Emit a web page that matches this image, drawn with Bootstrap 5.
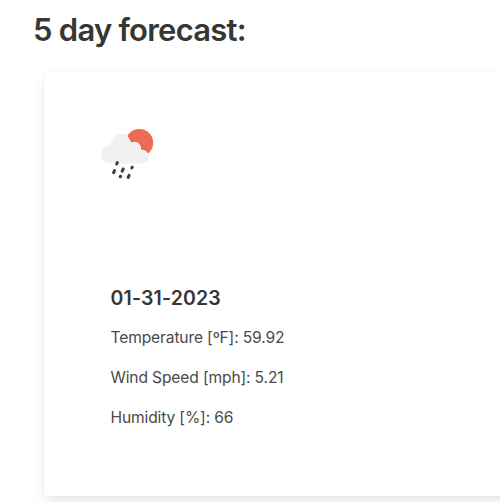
<!DOCTYPE html>
<html lang="en">
<head>
<meta charset="utf-8">
<meta name="viewport" content="width=device-width, initial-scale=1">
<title>5 day forecast</title>
<link href="https://cdn.jsdelivr.net/npm/bootstrap@5.3.0/dist/css/bootstrap.min.css" rel="stylesheet">
<style>
body { font-family: Inter, "Liberation Sans", sans-serif; color: #4a4a4a; background: #fff; }
.forecast { height: 502px; padding: 12px 0 0 33px; }
.forecast-title { font-size: 31px; font-weight: 600; line-height: 36px; color: #363636; letter-spacing: -.75px; }
.forecast-card { width: 520px; height: 425px; margin: 23px 0 0 11px; border-radius: 4px; box-shadow: 0 8px 16px -2px rgba(10,10,10,.1), 0 0 0 1px rgba(10,10,10,.02); padding: 49px 0 0 51px; }
.weather-icon { width: 64px; height: 64px; }
.details { margin: 103px 0 0 15.5px; }
.date { font-size: 19.5px; font-weight: 600; line-height: 22px; padding-bottom: 1px; color: #363636; letter-spacing: .16px; }
.details p { font-size: 15.6px; line-height: 24px; white-space: nowrap; letter-spacing: -.14px; }
</style>
</head>
<body>
<main class="forecast overflow-hidden">
  <h2 class="forecast-title mb-0">5 day forecast:</h2>
  <section class="forecast-card card border-0 bg-white">
    <svg class="weather-icon d-block" viewBox="0 0 64 64" aria-hidden="true">
      <clipPath id="sun"><circle cx="44.4" cy="22.8" r="13.8"/></clipPath>
      <circle cx="44.4" cy="22.8" r="13.8" fill="#ef6a52"/>
      <g clip-path="url(#sun)" fill="#ee4b3b">
        <circle cx="26" cy="24" r="11.2"/><circle cx="39.5" cy="28.3" r="7.6"/><circle cx="47" cy="36.4" r="7.9"/>
      </g>
      <g fill="#f1f1f1">
        <circle cx="15.3" cy="34.2" r="9.2"/><circle cx="26" cy="24" r="10.3"/>
        <circle cx="39.5" cy="28.3" r="6.7"/><circle cx="47" cy="36.4" r="7"/>
        <path d="M15.3 27H40L47 34V43.4H15.3Z"/>
      </g>
      <g stroke="#404040" stroke-width="3.1" stroke-linecap="round">
        <path d="M22.3 42.6l-.6 1.4M19.5 50.6l-.9 2M28.2 49l-1 2.2M37.3 47.2l-.5.7M25.6 56.3l-.4.5M34.1 55.4l-.9 2"/>
      </g>
    </svg>
    <div class="details">
      <h3 class="date mb-3">01-31-2023</h3>
      <p class="mb-3">Temperature [ºF]: 59.92</p>
      <p class="mb-3">Wind Speed [mph]: 5.21</p>
      <p class="mb-0">Humidity [%]: 66</p>
    </div>
  </section>
</main>
<script src="https://cdn.jsdelivr.net/npm/bootstrap@5.3.0/dist/js/bootstrap.bundle.min.js"></script>
</body>
</html>
